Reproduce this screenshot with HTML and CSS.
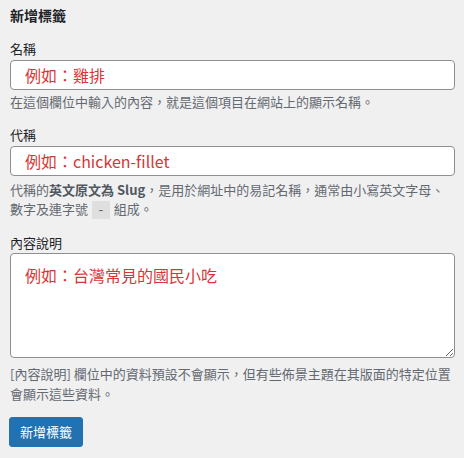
FILE: index.html
```html
<!DOCTYPE html>
<html lang="zh-Hant">
<head>
<meta charset="utf-8">
<link rel="stylesheet" href="styles.css">
</head>
<body>
<form class="form-wrap">
  <h2 class="title">新增標籤</h2>
  <div class="field">
    <label class="label" for="tag-name">名稱</label>
    <input class="input" id="tag-name" type="text" placeholder="例如：雞排">
    <p class="desc">在這個欄位中輸入的內容，就是這個項目在網站上的顯示名稱。</p>
  </div>
  <div class="field">
    <label class="label" for="tag-slug">代稱</label>
    <input class="input" id="tag-slug" type="text" placeholder="例如：chicken-fillet">
    <p class="desc desc-slug">代稱的<strong>英文原文為 Slug</strong>，是用於網址中的易記名稱，通常由小寫英文字母、數字及連字號 <code class="code">-</code> 組成。</p>
  </div>
  <div class="field">
    <label class="label" for="tag-desc">內容說明</label>
    <textarea class="textarea" id="tag-desc" placeholder="例如：台灣常見的國民小吃"></textarea>
    <p class="desc desc-area">[內容說明] 欄位中的資料預設不會顯示，但有些佈景主題在其版面的特定位置會顯示這些資料。</p>
  </div>
  <div class="actions">
    <button class="button" type="button">新增標籤</button>
  </div>
</form>
</body>
</html>
```
FILE: styles.css
```css
html, body {
  margin: 0;
  padding: 0;
  background: #f0f0f1;
}
body {
  font-family: "Noto Sans CJK TC", "Noto Sans", sans-serif;
  color: #3c434a;
  font-size: 13px;
  line-height: 1.5;
}
.form-wrap {
  padding: 0 9px 0 10px;
}
.title {
  margin: 5px 0 0;
  font-size: 14px;
  line-height: 20px;
  font-weight: 700;
  color: #1d2327;
}
.field {
  display: flex;
  flex-direction: column;
}
.label {
  display: block;
  margin-top: 14px;
  line-height: 19.5px;
  color: #1d2327;
}
.input {
  box-sizing: border-box;
  margin: 1px 0 0;
  width: 100%;
  height: 30px;
  padding: 0 14px;
  border: 1px solid #8c8f94;
  border-radius: 4px;
  background: #fff;
  font-family: "Noto Sans CJK TC", "Noto Sans", sans-serif;
  font-size: 16px;
  line-height: 28px;
  color: #2c3338;
  outline: none;
}
.input::placeholder,
.textarea::placeholder {
  color: #d63638;
  opacity: 1;
}
.textarea {
  box-sizing: border-box;
  margin: 1px 0 0;
  width: 100%;
  height: 105px;
  padding: 9px 14px;
  border: 1px solid #8c8f94;
  border-radius: 4px;
  background: #fff;
  font-family: "Noto Sans CJK TC", "Noto Sans", sans-serif;
  font-size: 16px;
  line-height: 24px;
  color: #2c3338;
  outline: none;
  resize: vertical;
  display: block;
}
.desc {
  margin: 2px 0 0;
  color: #646970;
  font-size: 13px;
  line-height: 19.5px;
}
.desc-slug {
  margin-top: 4px;
}
.desc-area {
  margin-top: 6px;
}
.desc strong {
  font-weight: 700;
  color: #50575e;
}
.code {
  font-family: "Liberation Mono", monospace;
  font-size: 13px;
  line-height: 1;
  background: rgba(0, 0, 0, 0.07);
  padding: 2px 5px 1px;
  margin: 0 1px;
}
.actions {
  margin-top: 14px;
}
.button {
  height: 30px;
  margin-left: -1px;
  padding: 0 10px;
  border: 1px solid #2271b1;
  border-radius: 3px;
  background: #2271b1;
  color: #fff;
  font-family: "Noto Sans CJK TC", "Noto Sans", sans-serif;
  font-size: 13px;
  line-height: 28px;
  cursor: pointer;
}
```
